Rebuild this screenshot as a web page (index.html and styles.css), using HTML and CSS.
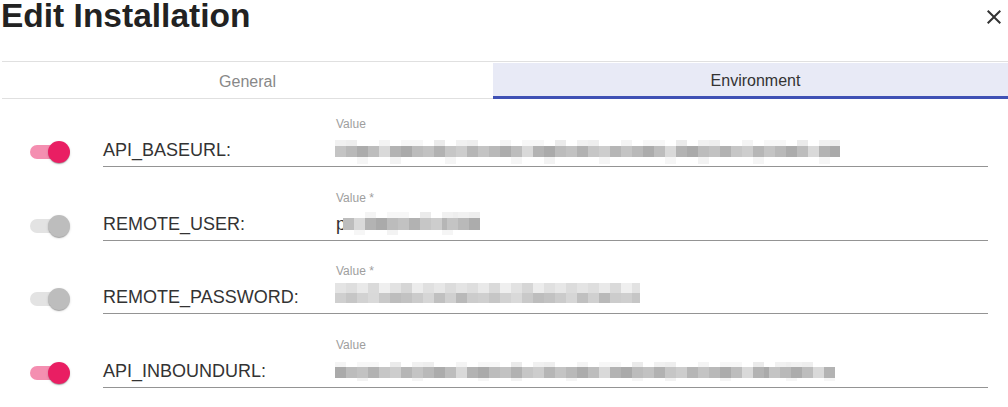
FILE: index.html
```html
<!DOCTYPE html>
<html lang="en">
<head>
<meta charset="utf-8">
<title>Edit Installation</title>
<link rel="stylesheet" href="styles.css">
</head>
<body>
<div class="dialog">
  <header class="header">
    <h1 class="title">Edit Installation</h1>
    <svg class="close" viewBox="0 0 24 24" width="24" height="24" aria-label="Close"><path d="M19 6.41L17.59 5 12 10.59 6.41 5 5 6.41 10.59 12 5 17.59 6.41 19 12 13.41 17.59 19 19 17.59 13.41 12z"/></svg>
  </header>
  <nav class="tabs">
    <div class="tab tab-general">General</div>
    <div class="tab tab-env">Environment</div>
  </nav>
  <div class="rows">
    <div class="row">
      <div class="switch-cell"><div class="switch on"><span class="track"></span><span class="thumb"></span></div></div>
      <div class="field">
        <div class="field-name">API_BASEURL:</div>
        <div class="input">
          <div class="input-label">Value</div>
          <div class="input-value"><div class="blur blur-a w1"></div></div>
        </div>
      </div>
    </div>
    <div class="row">
      <div class="switch-cell"><div class="switch off"><span class="track"></span><span class="thumb"></span></div></div>
      <div class="field">
        <div class="field-name">REMOTE_USER:</div>
        <div class="input">
          <div class="input-label">Value *</div>
          <div class="input-value"><span class="value-text">p</span><div class="blur blur-b w2"></div></div>
        </div>
      </div>
    </div>
    <div class="row">
      <div class="switch-cell"><div class="switch off"><span class="track"></span><span class="thumb"></span></div></div>
      <div class="field">
        <div class="field-name">REMOTE_PASSWORD:</div>
        <div class="input">
          <div class="input-label">Value *</div>
          <div class="input-value"><div class="blur blur-c w3"></div></div>
        </div>
      </div>
    </div>
    <div class="row">
      <div class="switch-cell"><div class="switch on"><span class="track"></span><span class="thumb"></span></div></div>
      <div class="field">
        <div class="field-name">API_INBOUNDURL:</div>
        <div class="input">
          <div class="input-label">Value</div>
          <div class="input-value"><div class="blur blur-a alt w4"></div></div>
        </div>
      </div>
    </div>
  </div>
</div>
</body>
</html>
```
FILE: styles.css
```css
:root {
  --mid: repeating-linear-gradient(90deg,
    #c4c4c4 0 11px, #b9b9b9 11px 22px, #acacac 22px 33px, #bdbdbd 33px 44px,
    #d9d9d9 44px 55px, #b3b3b3 55px 66px, #aaaaaa 66px 77px, #bcbcbc 77px 88px,
    #c2c2c2 88px 99px, #b2b2b2 99px 110px, #c6c6c6 110px 121px, #cdcdcd 121px 132px,
    #b6b6b6 132px 143px);
  --light: repeating-linear-gradient(90deg,
    #f1f1f1 0 11px, #eeeeee 11px 22px, #ffffff 22px 44px, #f4f4f4 44px 55px,
    #ffffff 55px 66px, #f7f7f7 66px 88px, #ffffff 88px 99px, #ebebeb 99px 110px,
    #ffffff 110px 121px);
  --faint: repeating-linear-gradient(90deg,
    #ffffff 0 22px, #f6f6f6 22px 33px, #ffffff 33px 55px, #f3f3f3 55px 66px,
    #ffffff 66px 110px, #f5f5f5 110px 121px, #ffffff 121px 154px);
  --top3: repeating-linear-gradient(90deg,
    #e4e4e4 0 11px, #dedede 11px 22px, #e9e9e9 22px 33px, #dadada 33px 44px,
    #efefef 44px 55px, #e2e2e2 55px 66px, #d6d6d6 66px 77px, #ececec 77px 88px,
    #e0e0e0 88px 99px, #e7e7e7 99px 110px, #dcdcdc 110px 121px);
  --bot3: repeating-linear-gradient(90deg,
    #cfcfcf 0 11px, #c6c6c6 11px 22px, #d2d2d2 22px 33px, #d9d9d9 33px 44px,
    #c9c9c9 44px 55px, #bdbdbd 55px 66px, #c2c2c2 66px 77px, #cbcbcb 77px 88px,
    #d6d6d6 88px 99px, #c0c0c0 99px 110px, #d0d0d0 110px 121px, #b9b9b9 121px 132px,
    #cccccc 132px 143px);
}

html, body {
  margin: 0;
  padding: 0;
  background: #ffffff;
  overflow: hidden;
}

body {
  font-family: "Liberation Sans", Arial, sans-serif;
  color: #333333;
}

.dialog {
  width: 1008px;
}

.header {
  height: 61px;
  display: flex;
  justify-content: space-between;
  align-items: flex-start;
  padding: 0 2px 0 1px;
  box-sizing: border-box;
}

.title {
  margin: 0;
  font-size: 33.5px;
  line-height: 32px;
  font-weight: bold;
  color: #222222;
}

.close {
  margin-top: 5px;
  fill: #333333;
}

.tabs {
  margin-left: 2px;
  border-top: 1px solid #e0e0e0;
  padding-top: 1px;
  display: flex;
}

.tab {
  height: 36px;
  box-sizing: border-box;
  font-size: 16px;
  line-height: 20px;
  text-align: center;
}

.tab-general {
  width: 491px;
  padding-top: 9px;
  color: #888888;
  border-bottom: 1px solid #e0e0e0;
}

.tab-env {
  flex: 1;
  padding-top: 8px;
  padding-left: 10px;
  color: #333333;
  background: #e8eaf6;
  border-bottom: 3px solid #3f51b5;
}

.rows {
  padding-top: 18px;
  display: flex;
  flex-direction: column;
  gap: 23.67px;
}

.row {
  display: flex;
  align-items: flex-end;
}

.switch-cell {
  width: 103px;
  flex-shrink: 0;
  padding-bottom: 5px;
}

.switch {
  position: relative;
  width: 40px;
  height: 20px;
  margin-left: 28px;
}

.track {
  position: absolute;
  left: 2px;
  top: 3px;
  width: 34px;
  height: 14px;
  border-radius: 7px;
}

.thumb {
  position: absolute;
  left: 20px;
  top: -1px;
  width: 22px;
  height: 22px;
  border-radius: 50%;
  box-shadow: 0 2px 1px -1px rgba(0,0,0,0.2), 0 1px 1px 0 rgba(0,0,0,0.14), 0 1px 3px 0 rgba(0,0,0,0.12);
}

.switch.on .track { background: #f48fb1; }
.switch.on .thumb { background: #e91e63; }
.switch.off .track { background: #e3e3e3; }
.switch.off .thumb { background: #bdbdbd; }

.field {
  width: 885px;
  display: flex;
  align-items: flex-end;
  border-bottom: 1px solid #949494;
}

.field-name {
  width: 232px;
  flex-shrink: 0;
  font-size: 18px;
  line-height: 22px;
  padding-bottom: 5px;
  color: #333333;
}

.input {
  flex: 1;
  display: flex;
  flex-direction: column;
}

.input-label {
  padding-left: 1px;
  font-size: 12px;
  line-height: 14px;
  color: #9e9e9e;
  margin-bottom: 9px;
}

.input-value {
  height: 24px;
  margin-bottom: 2px;
  display: flex;
  align-items: flex-start;
}

.value-text {
  font-size: 18px;
  line-height: 20px;
  color: #333333;
  margin-left: 1px;
}

.blur {
  background-repeat: repeat-x;
  flex-shrink: 0;
}

.blur-a {
  height: 24px;
  background-image: var(--light), var(--mid), var(--faint);
  background-size: 100% 6px, 100% 11px, 100% 7px;
  background-position: 0 0, 0 6px, 0 17px;
}

.blur-a.alt {
  background-position: -44px 1px, -66px 6px, -33px 17px;
  background-size: 100% 5px, 100% 11px, 100% 3px;
}

.blur-b {
  height: 23px;
  margin-top: -2px;
  margin-left: -3px;
  background-image: var(--light), var(--mid), var(--faint);
  background-size: 100% 6px, 100% 12px, 100% 5px;
  background-position: -22px 0, -33px 6px, -11px 18px;
}

.blur-c {
  height: 20px;
  margin-top: -4px;
  background-image: var(--top3), var(--bot3);
  background-size: 100% 10px, 100% 10px;
  background-position: 0 0, 0 10px;
}

.w1 { width: 505px; }
.w2 { width: 137px; }
.w3 { width: 305px; }
.w4 { width: 500px; }
```
